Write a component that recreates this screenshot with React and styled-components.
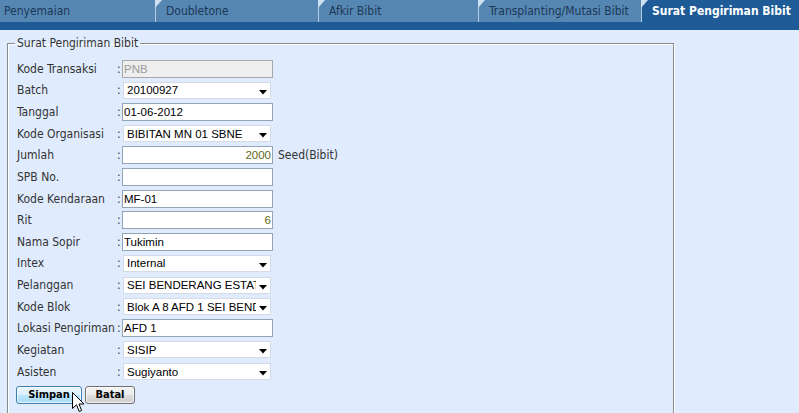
import React from "react";
import styled, { createGlobalStyle } from "styled-components";

const Global = createGlobalStyle`
  html, body { margin: 0; padding: 0; background: #e0ecfe; overflow: hidden; }
  body { font-family: "DejaVu Sans Condensed", "DejaVu Sans", sans-serif; font-size: 12px; color: #333; }
  * { box-sizing: border-box; }
`;

const Page = styled.div`
  position: relative;
  width: 799px;
  height: 413px;
  overflow: hidden;
`;

const TabBar = styled.div`
  display: flex;
  height: 22px;
  background: #5687b3;
`;

const Tab = styled.div`
  position: relative;
  width: ${(p) => p.$w}px;
  height: 22px;
  padding-left: ${(p) => (p.$first ? 4 : 11)}px;
  display: flex;
  align-items: center;
  background: ${(p) => (p.$active ? "#1e5b97" : "#5687b3")};
  color: ${(p) => (p.$active ? "#ffffff" : "#1b3856")};
  font-weight: ${(p) => (p.$active ? "bold" : "normal")};
  font-size: 12px;
  white-space: nowrap;
  border-top-left-radius: ${(p) => (p.$active ? "6px" : "0")};
  ${(p) =>
    p.$first
      ? ""
      : `
  &::before {
    content: "";
    position: absolute;
    left: 0;
    top: 0;
    width: 1px;
    height: 22px;
    background: #b3cbe1;
  }
  &::after {
    content: "";
    position: absolute;
    left: 0;
    top: 0;
    width: 7px;
    height: 8px;
    background: #cfe0ef;
    clip-path: polygon(0 0, 100% 0, 0 100%);
  }`}
`;

const Band = styled.div`
  height: 8px;
  background: #1f5b97;
`;

const Fieldset = styled.fieldset`
  margin: 6px 0 0 7px;
  width: 667px;
  height: 420px;
  padding: 0 0 0 7px;
  border: 1px solid #8a8a8a;
  box-shadow: 1px 1px 0 #ffffff, inset 1px 1px 0 #ffffff;
`;

const Legend = styled.legend`
  padding: 0 2px;
  color: #333;
  font-size: 12px;
`;

const Form = styled.div`
  display: grid;
  grid-template-columns: 100px 5px 152px auto;
  grid-auto-rows: 21.64px;
  align-items: center;
  padding: 8px 0 0 2px;
`;

const Label = styled.div`
  color: #333;
  white-space: nowrap;
`;

const Colon = styled.div`
  color: #333;
`;

const Cell = styled.div`
  display: flex;
  align-items: center;
`;

const TextInput = styled.input`
  width: 151px;
  height: 18px;
  margin: 0;
  padding: 0 1px;
  border: 1px solid ${(p) => (p.disabled ? "#a8a8a8" : "#93a3b8")};
  background: ${(p) => (p.disabled ? "#efefef" : "#ffffff")};
  color: ${(p) => (p.disabled ? "#9a9a9a" : p.$num ? "#5c6b14" : "#000")};
  text-align: ${(p) => (p.$num ? "right" : "left")};
  font-family: "Liberation Sans", Arial, sans-serif;
  font-size: 11.5px;
  outline: none;
`;

const SelectBox = styled.div`
  position: relative;
  width: 148px;
  height: 17px;
  margin-left: 1px;
  background: #ffffff;
  border: 1px solid #d3dbe6;
  font-family: "Liberation Sans", Arial, sans-serif;
  font-size: 11.5px;
  color: #000;
  display: flex;
  align-items: center;
`;

const SelectText = styled.div`
  width: 132px;
  padding-left: 3px;
  overflow: hidden;
  white-space: nowrap;
`;

const Arrow = styled.svg`
  position: absolute;
  right: 3px;
  top: 7px;
`;

const Unit = styled.span`
  margin-left: 4px;
  color: #333;
`;

const Buttons = styled.div`
  grid-column: 1 / span 4;
  display: flex;
  gap: 3px;
  margin-left: -1px;
  padding-top: 3px;
`;

const Button = styled.button`
  height: 18px;
  width: ${(p) => p.$w}px;
  margin: 0;
  padding: 0;
  border: 1px solid ${(p) => (p.$hover ? "#3c7fb1" : "#707070")};
  border-radius: 3px;
  background: ${(p) =>
    p.$hover
      ? "linear-gradient(#eaf6fd, #d9f0fc 50%, #bee6fd 50%, #a7d9f5)"
      : "linear-gradient(#f2f2f2, #ebebeb 50%, #dddddd 50%, #cfcfcf)"};
  box-shadow: inset 0 0 0 1px rgba(255, 255, 255, 0.7);
  font-family: "DejaVu Sans Condensed", "DejaVu Sans", sans-serif;
  font-weight: bold;
  font-size: 11px;
  color: #000;
`;

const Cursor = styled.svg`
  position: absolute;
  left: 72px;
  top: 392px;
`;

const tabs = [
  { t: "Penyemaian", w: 155, first: true },
  { t: "Doubletone", w: 163 },
  { t: "Afkir Bibit", w: 160 },
  { t: "Transplanting/Mutasi Bibit", w: 163 },
  { t: "Surat Pengiriman Bibit", w: 158, active: true },
];

const rows = [
  { l: "Kode Transaksi", type: "text", v: "PNB", disabled: true },
  { l: "Batch", type: "select", v: "20100927" },
  { l: "Tanggal", type: "text", v: "01-06-2012" },
  { l: "Kode Organisasi", type: "select", v: "BIBITAN MN 01 SBNE" },
  { l: "Jumlah", type: "text", v: "2000", num: true, unit: "Seed(Bibit)" },
  { l: "SPB No.", type: "text", v: "" },
  { l: "Kode Kendaraan", type: "text", v: "MF-01" },
  { l: "Rit", type: "text", v: "6", num: true },
  { l: "Nama Sopir", type: "text", v: "Tukimin" },
  { l: "Intex", type: "select", v: "Internal" },
  { l: "Pelanggan", type: "select", v: "SEI BENDERANG ESTATE" },
  { l: "Kode Blok", type: "select", v: "Blok A 8 AFD 1 SEI BENDERANG" },
  { l: "Lokasi Pengiriman", type: "text", v: "AFD 1" },
  { l: "Kegiatan", type: "select", v: "SISIP" },
  { l: "Asisten", type: "select", v: "Sugiyanto" },
];

function Select({ value }) {
  return (
    <SelectBox>
      <SelectText>{value}</SelectText>
      <Arrow width="8" height="5" viewBox="0 0 8 5">
        <path d="M0 0 L8 0 L4 4.5 Z" fill="#000" />
      </Arrow>
    </SelectBox>
  );
}

export default function App() {
  return (
    <Page>
      <Global />
      <TabBar>
        {tabs.map((t) => (
          <Tab key={t.t} $w={t.w} $first={t.first} $active={t.active}>
            {t.t}
          </Tab>
        ))}
      </TabBar>
      <Band />
      <Fieldset>
        <Legend>Surat Pengiriman Bibit</Legend>
        <Form>
          {rows.map((r) => (
            <React.Fragment key={r.l}>
              <Label>{r.l}</Label>
              <Colon>:</Colon>
              <Cell>
                {r.type === "text" ? (
                  <TextInput
                    value={r.v}
                    readOnly
                    disabled={r.disabled}
                    $num={r.num}
                  />
                ) : (
                  <Select value={r.v} />
                )}
              </Cell>
              <Cell>{r.unit ? <Unit>{r.unit}</Unit> : null}</Cell>
            </React.Fragment>
          ))}
          <Buttons>
            <Button $w={66} $hover>
              Simpan
            </Button>
            <Button $w={50}>Batal</Button>
          </Buttons>
        </Form>
      </Fieldset>
      <Cursor width="13" height="21" viewBox="0 0 13 21">
        <path
          d="M0.5 0.5 L0.5 16.5 L4.5 12.8 L7.2 19.5 L9.6 18.5 L7 12 L12 12 Z"
          fill="#ffffff"
          stroke="#000000"
          strokeWidth="1"
          strokeLinejoin="miter"
        />
      </Cursor>
    </Page>
  );
}
